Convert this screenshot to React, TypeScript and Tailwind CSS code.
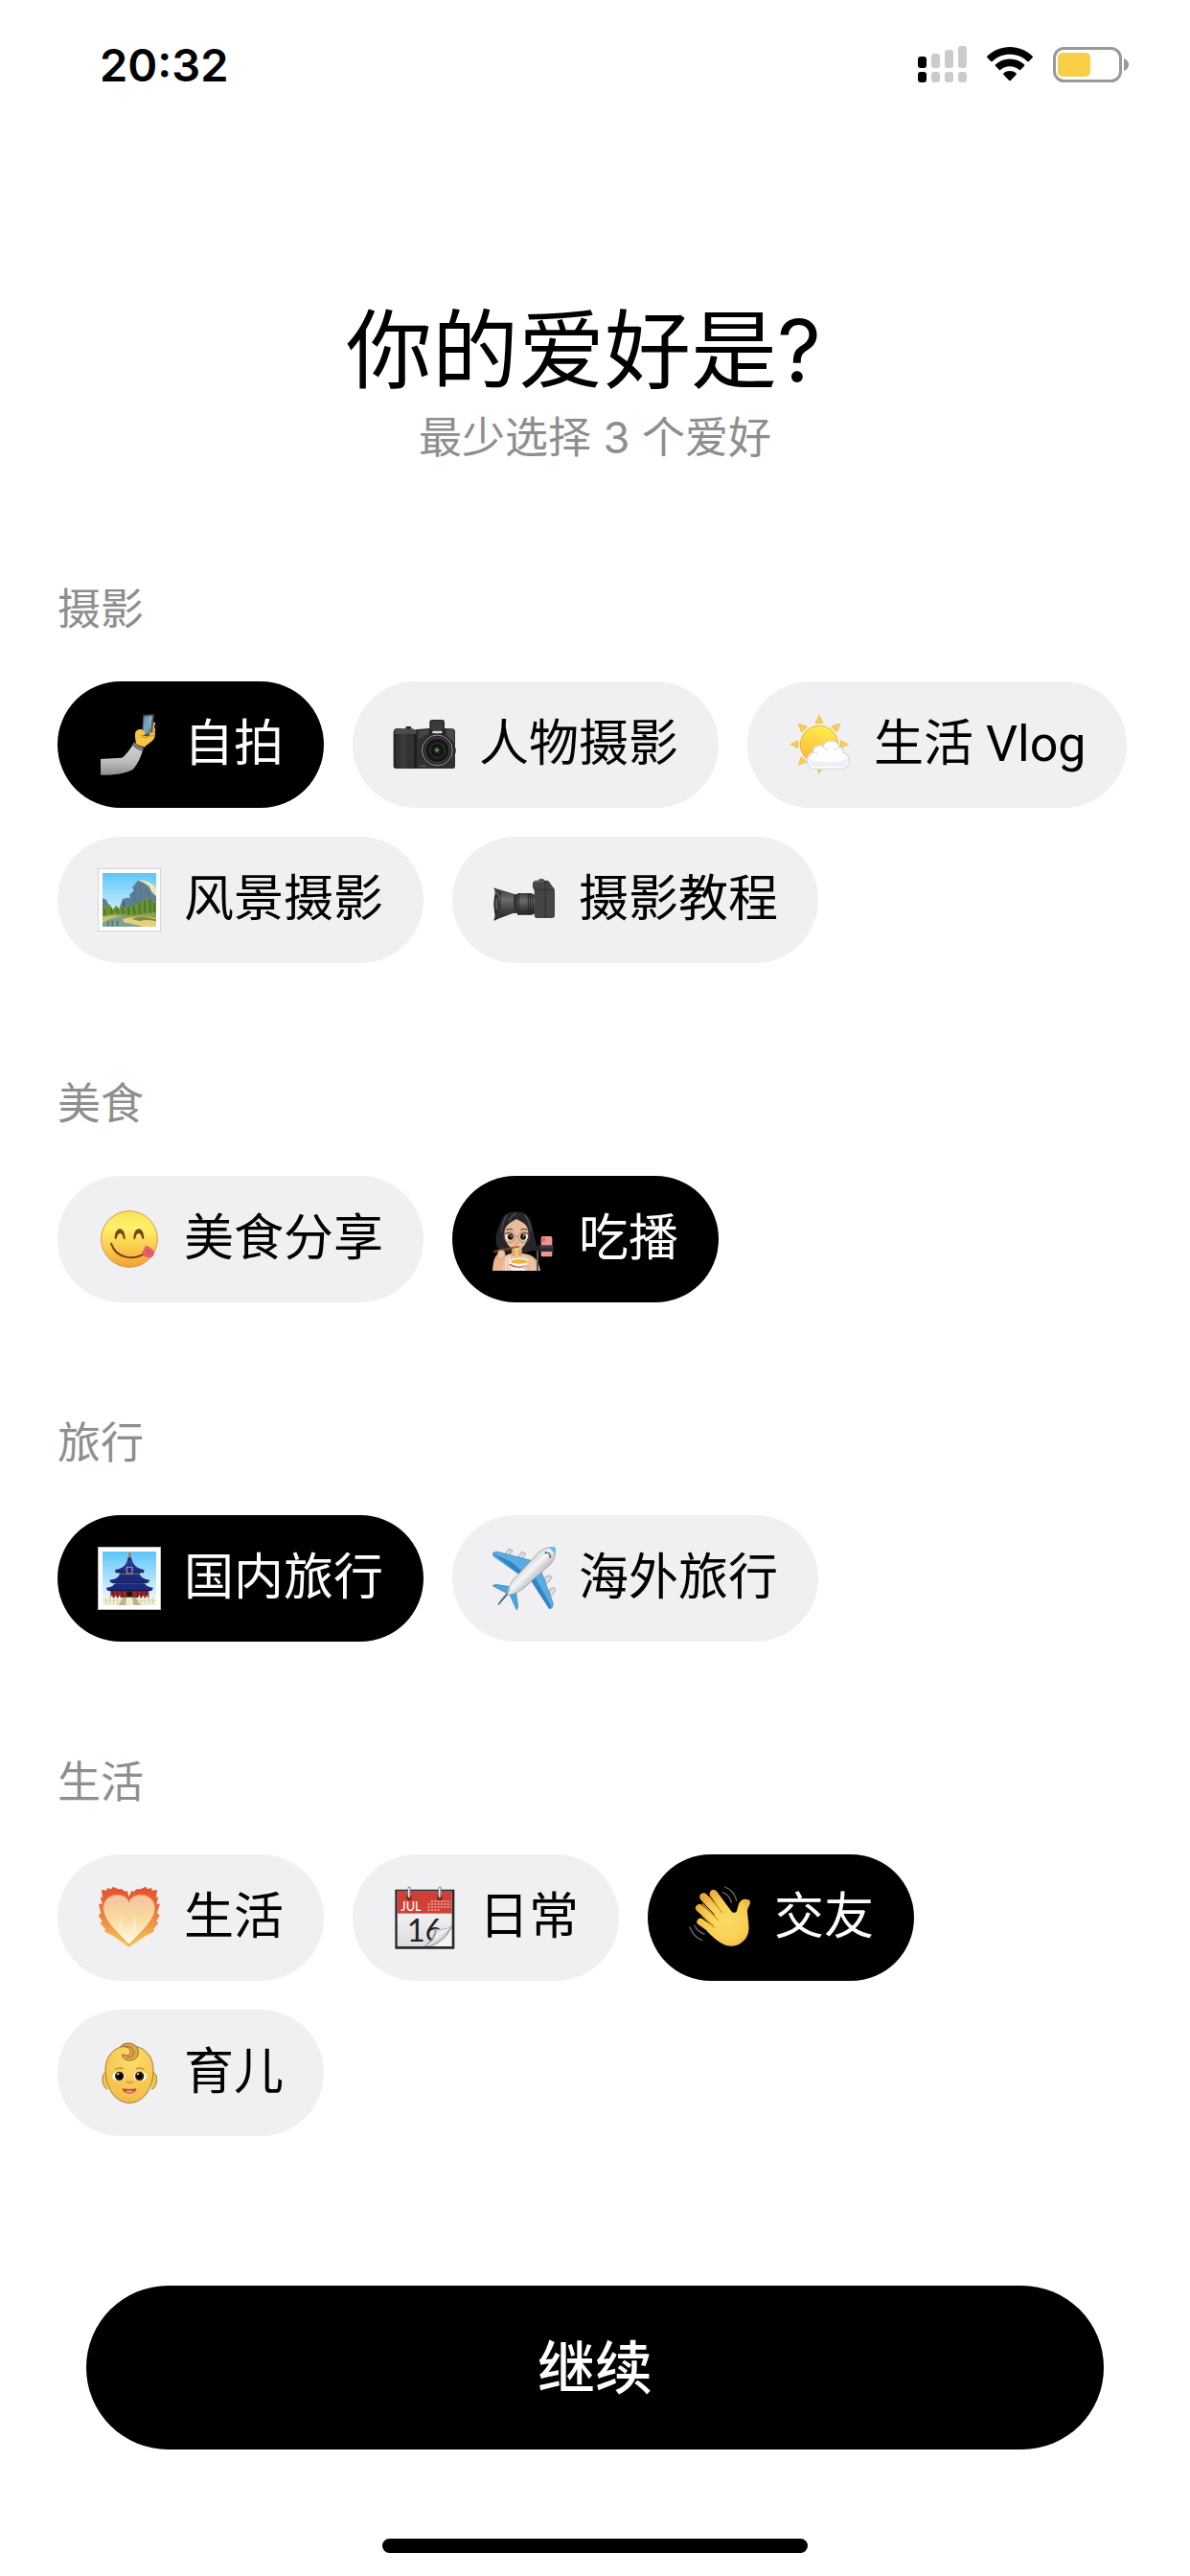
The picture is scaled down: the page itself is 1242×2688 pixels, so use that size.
import { useState } from "react";
import type { ReactNode } from "react";

function Art({ children }: { children: ReactNode }) {
  return (
    <svg viewBox="0 0 198 198" className="size-[66px] shrink-0" aria-hidden="true">
      {children}
    </svg>
  );
}

function SelfieIcon() {
  return (
    <Art>
      <defs>
        <linearGradient id="sleeve" x1="0" y1="0" x2="0" y2="1">
          <stop offset="0" stopColor="#d4d4d6" />
          <stop offset="0.6" stopColor="#bcbcbe" />
          <stop offset="1" stopColor="#8e8e90" />
        </linearGradient>
        <linearGradient id="glass" x1="0" y1="0" x2="1" y2="1">
          <stop offset="0" stopColor="#5e87a3" />
          <stop offset="0.5" stopColor="#7fa6bf" />
          <stop offset="1" stopColor="#496f8c" />
        </linearGradient>
      </defs>
      <path d="M9 144 L76 140 C92 128 105 108 114 92 Q126 104 143 110 C136 136 126 158 111 176 C88 190 44 195 9 194Z" fill="url(#sleeve)" />
      <path d="M114 92 Q126 106 143 110 L139 120 Q120 114 108 101Z" fill="#77777a" />
      <path d="M120 96 C118 84 115 70 118 60 C122 50 136 48 142 54 L168 40 C172 28 180 26 180 32 C181 36 176 40 178 46 C182 52 179 58 179 64 C180 72 178 80 172 86 C162 94 152 100 146 107 Q130 104 120 96Z" fill="#f6bd38" />
      <path d="M142 6 L172 4 Q177 4 176 9 L171 70 Q170 74 166 74 L141 71 Q137 70 138 66Z" fill="#47525c" />
      <path d="M145 11 L170 9 L165 66 L142 64Z" fill="url(#glass)" />
      <path d="M160 10 L170 9 L166 60Z" fill="#96b6c9" opacity="0.7" />
      <path d="M121 62 C124 49 142 50 145 58 Q154 66 143 70 Q136 70 138 77 Q154 78 162 73 L164 62 L178 56 L178 66 C174 84 157 96 147 105 L122 94Z" fill="#f9c545" />
      <path d="M134 68 Q138 80 156 76 M166 64 L178 59 M163 73 L176 70" stroke="#c9892a" strokeWidth="3" fill="none" />
    </Art>
  );
}

function CameraIcon() {
  return (
    <Art>
      <defs>
        <linearGradient id="grip" x1="0" y1="0" x2="1" y2="0">
          <stop offset="0" stopColor="#1f1f1f" />
          <stop offset="0.4" stopColor="#3c3c3c" />
          <stop offset="0.9" stopColor="#292929" />
          <stop offset="1" stopColor="#111" />
        </linearGradient>
        <radialGradient id="lens">
          <stop offset="0" stopColor="#5d8a4c" />
          <stop offset="0.2" stopColor="#1d3018" />
          <stop offset="0.4" stopColor="#0b0d0c" />
          <stop offset="0.7" stopColor="#1c1c1c" />
          <stop offset="1" stopColor="#0d0d0d" />
        </radialGradient>
      </defs>
      <path d="M70 52 L112 48 L166 48 L188 49 Q194 50 195 58 L195 168 Q195 174 188 174 L60 174Z" fill="#303030" />
      <path d="M82 56 L112 52 L112 66 L80 80Z" fill="#454545" />
      <path d="M168 52 L188 52 Q192 54 192 60 L192 92 L168 70Z" fill="#4a4a4a" />
      <rect x="115" y="21" width="47" height="46" rx="8" fill="#242424" />
      <rect x="119" y="24" width="39" height="30" rx="6" fill="#3a3a3a" />
      <rect x="124" y="56" width="30" height="8" rx="2" fill="#d8d8d8" />
      <rect x="40" y="42" width="18" height="10" rx="4" fill="#242424" />
      <path d="M10 48 Q3 50 2 60 L2 166 Q2 174 10 174 L74 174 L74 64 L66 50Z" fill="url(#grip)" />
      <path d="M10 48 L66 50 L74 66 L4 66Z" fill="#4c4c4c" />
      <path d="M14 70 V170 M60 70 V170" stroke="#555" strokeWidth="1.5" />
      <circle cx="139" cy="117" r="51" fill="#111" />
      <circle cx="139" cy="117" r="48" fill="#2c2c2c" stroke="#b5b5b5" strokeWidth="2.5" />
      <circle cx="139" cy="117" r="38" fill="url(#lens)" stroke="#484848" strokeWidth="3" />
      <circle cx="139" cy="117" r="22" fill="none" stroke="#3c3c3c" strokeWidth="3" />
      <circle cx="137" cy="115" r="8" fill="#2b4a24" />
      <circle cx="138" cy="116" r="3" fill="#b9dca6" />
      <rect x="191" y="110" width="6" height="16" rx="2" fill="#222" />
      <path d="M84 166 H104" stroke="#888" strokeWidth="2" />
    </Art>
  );
}

function SunIcon() {
  return (
    <Art>
      <defs>
        <linearGradient id="sun" x1="0.6" y1="0" x2="0.3" y2="1">
          <stop offset="0" stopColor="#fdee4c" />
          <stop offset="1" stopColor="#f7b838" />
        </linearGradient>
      </defs>
      {[0, 45, 90, 135, 180, 225, 270, 315].map((a) => (
        <path key={a} d="M99 7 L111 31 Q99 34 87 31Z" fill="#f9cf48" stroke="#eeb23f" strokeWidth="2" transform={`rotate(${a} 99 98)`} />
      ))}
      <circle cx="99" cy="99" r="59" fill="url(#sun)" stroke="#f3ae3a" strokeWidth="3" />
      <path d="M84 175 C55 175 55 128 80 124 C78 106 98 96 111 106 C118 80 157 82 163 108 C172 108 177 116 174 125 C200 127 200 174 170 175Z" fill="#fff" stroke="#d5d9e8" strokeWidth="4" />
      <path d="M82 169 C66 165 64 146 68 141 C76 154 96 150 104 150 C130 158 170 152 188 141 C191 160 182 169 168 169Z" fill="#eef0f8" />
      <path d="M111 107 Q122 108 125 117 M146 116 Q154 108 163 109 M80 125 Q89 122 94 128" fill="none" stroke="#dfe2ee" strokeWidth="4" strokeLinecap="round" />
    </Art>
  );
}

function Frame({ children }: { children: ReactNode }) {
  return (
    <Art>
      <defs>
        <linearGradient id="sky" x1="0" y1="0" x2="0" y2="1">
          <stop offset="0" stopColor="#5cc6fb" />
          <stop offset="0.8" stopColor="#def3fb" />
        </linearGradient>
        <clipPath id="frameClip">
          <rect x="15" y="15" width="168" height="168" />
        </clipPath>
      </defs>
      <rect x="1" y="1" width="196" height="196" fill="#fff" stroke="#c4c4c6" strokeWidth="2" />
      <rect x="15" y="15" width="168" height="168" fill="url(#sky)" />
      <g clipPath="url(#frameClip)">{children}</g>
    </Art>
  );
}

function LandscapeIcon() {
  return (
    <Frame>
      <path d="M15 94 L26 98 L42 128 L66 130 L78 96 L92 92 L100 94 L100 82 L114 70 L108 60 L126 38 L146 40 L166 52 L183 80 V140 H15Z" fill="#5e7d97" />
      <path d="M126 38 Q160 34 183 62 L183 88 L170 76 L160 56 L142 44Z" fill="#f0e6b4" />
      <path d="M118 64 L112 92 L122 104 L112 124 M130 54 L136 74 L128 98 L146 114 M150 62 L162 88 L156 106" stroke="#526f88" strokeWidth="3" fill="none" />
      <path d="M80 98 L74 126 L88 118Z" fill="#486780" />
      <path d="M15 120 L22 110 L28 124 L38 112 L46 130 L58 116 L68 128 L78 116 L86 126 L96 114 L104 124 L112 106 L120 118 L130 102 L136 112 L146 92 L152 104 L162 88 L168 110 L176 98 L183 108 V162 H15Z" fill="#6c9435" />
      <path d="M20 126 L24 150 M42 124 L45 148 M60 126 L64 146 M78 124 L80 146 M96 122 L98 146 M112 116 L116 150 M130 110 L132 148 M147 102 L148 146 M163 98 L166 146 M176 108 L178 148" stroke="#4b7829" strokeWidth="6" />
      <path d="M15 150 Q60 136 100 148 L183 138 V184 H15Z" fill="#8fa052" />
      <path d="M15 160 Q50 150 110 158 L126 184 H15Z" fill="#7fa199" />
      <path d="M15 152 Q45 144 72 150 L40 158 L15 170Z" fill="#c9c069" />
      <path d="M78 160 Q120 146 183 156 V184 H144 Q110 172 84 170Z" fill="#e5d07c" />
      <path d="M106 158 Q140 146 183 160 L183 166 Q150 158 132 166Z" fill="#7f8c3e" />
      <path d="M32 166 V180 M46 164 V182 M62 164 V180" stroke="#4f7a58" strokeWidth="5" />
    </Frame>
  );
}

function TempleIcon() {
  return (
    <Frame>
      <path d="M97 20 Q100 16 103 20 L104 44 H96Z" fill="#c8642b" />
      <path d="M94 36 Q100 30 106 36 C108 58 126 70 146 72 L144 80 H56 L54 72 C76 70 92 58 94 36Z" fill="#1d2c84" />
      <path d="M66 78 H134 L130 92 H70Z" fill="#3d5576" />
      <path d="M68 88 H132 C138 98 148 102 162 104 Q163 112 154 113 H46 Q37 112 38 104 C54 102 62 98 68 88Z" fill="#1b2a80" />
      <path d="M54 111 H146 L142 122 H58Z" fill="#4d6a80" />
      <path d="M52 116 H148 C154 124 162 126 173 128 Q172 138 164 138 H36 Q28 138 27 128 C40 126 48 124 52 116Z" fill="#1b2a80" />
      <path d="M40 138 H160 V160 H40Z" fill="#93272a" />
      <path d="M48 136 V160 M62 136 V160 M76 136 V160 M124 136 V160 M138 136 V160 M152 136 V160" stroke="#5e1718" strokeWidth="3" />
      <path d="M56 80 H144 M46 113 H154 M36 137 H164" stroke="#0c1442" strokeWidth="3" />
      <path d="M84 74 Q95 64 97 44 M112 74 Q106 66 103 44" stroke="#3d53b4" strokeWidth="3" fill="none" />
      <rect x="91" y="64" width="17" height="20" fill="#1b2a80" stroke="#d09a62" strokeWidth="3" />
      <rect x="91" y="140" width="17" height="20" fill="#2b0c10" />
      <path d="M15 160 H183 V184 H15Z" fill="#eeead0" />
      <path d="M20 154 V182 M32 154 V182 M44 154 V182 M56 154 V182 M68 154 V182 M130 154 V182 M142 154 V182 M154 154 V182 M166 154 V182 M178 154 V182" stroke="#f8f5e2" strokeWidth="5" />
      <path d="M15 168 H183 M26 160 V180 M38 160 V180 M50 160 V180 M62 160 V180 M136 160 V180 M148 160 V180 M160 160 V180 M172 160 V180" stroke="#cbc6a4" strokeWidth="2" />
      <path d="M80 158 H118 L136 184 H64Z" fill="#b9b58f" />
      <path d="M90 158 H108 L112 184 H88Z" fill="#f1eddb" />
    </Frame>
  );
}

function LensCameraIcon() {
  return (
    <Art>
      <defs>
        <linearGradient id="barrel" x1="0" y1="0" x2="0" y2="1">
          <stop offset="0" stopColor="#3b3b3b" />
          <stop offset="0.35" stopColor="#6c6c6c" />
          <stop offset="0.7" stopColor="#3f3f3f" />
          <stop offset="1" stopColor="#232323" />
        </linearGradient>
      </defs>
      <rect x="144" y="33" width="18" height="12" rx="5" fill="#555" />
      <path d="M126 58 V46 Q128 38 138 38 H172 Q178 40 183 50 L192 62 Q195 66 195 74 V148 Q194 156 186 156 H140 Q131 156 131 146 V68 Q126 66 126 58Z" fill="#454545" />
      <path d="M165 40 V66 M131 67 H193 M166 66 V154" stroke="#2e2e2e" strokeWidth="3" />
      <path d="M130 46 Q132 42 140 42 H160" stroke="#6e6e6e" strokeWidth="3" fill="none" />
      <path d="M4 62 Q6 60 12 64 L72 82 V138 L14 160 Q5 166 4 162 Q10 152 6 138 V86 Q10 72 4 62Z" fill="url(#barrel)" />
      <ellipse cx="12" cy="112" rx="8" ry="30" fill="#222" />
      <ellipse cx="13" cy="112" rx="4" ry="22" fill="#5a5a5a" />
      <path d="M4 62 Q22 74 24 90 Q18 112 24 134 Q18 152 4 162 L14 158 L28 150 Q22 112 28 76Z" fill="#333" />
      <rect x="66" y="81" width="12" height="60" rx="2" fill="#333" />
      <path d="M78 78 H122 L132 84 V142 L122 146 H78Z" fill="url(#barrel)" />
      <path d="M82 78 V146 M112 78 V146 M119 79 V145 M126 82 V144" stroke="#252525" strokeWidth="3" />
    </Art>
  );
}

function YumIcon() {
  return (
    <Art>
      <defs>
        <linearGradient id="yum" x1="0" y1="0" x2="0" y2="1">
          <stop offset="0" stopColor="#fae25a" />
          <stop offset="0.3" stopColor="#fdf16a" />
          <stop offset="0.65" stopColor="#f9cc4d" />
          <stop offset="1" stopColor="#f2a038" />
        </linearGradient>
      </defs>
      <circle cx="99" cy="99" r="88" fill="url(#yum)" stroke="#d99a34" strokeWidth="3" />
      <path d="M53 96 C54 58 85 56 86 98 Q84 102 80 97 C77 76 63 76 59 97 Q56 101 53 96Z M112 98 C113 56 144 58 145 96 Q142 101 139 97 C135 76 121 76 118 97 Q114 102 112 98Z" fill="#7a3f10" />
      <path d="M42 113 C60 166 118 164 150 142" fill="none" stroke="#7a3f10" strokeWidth="6" strokeLinecap="round" />
      <path d="M152 120 L142 138 Q136 146 146 151 C163 160 176 156 175 142 C174 128 163 128 152 120Z" fill="#e8606c" stroke="#cf4455" strokeWidth="2" />
      <path d="M151 134 Q163 134 162 146" fill="none" stroke="#b93748" strokeWidth="3" />
    </Art>
  );
}

function MukbangIcon() {
  return (
    <Art>
      <path d="M76 14 C110 8 125 44 128 76 C134 106 142 118 136 130 L104 142 H36 C12 132 8 110 12 84 C22 54 30 16 62 14 Q70 12 76 14Z" fill="#262527" />
      <path d="M44 24 Q32 44 28 76 M100 22 Q116 42 120 76 M76 18 Q60 24 50 44" stroke="#48474a" strokeWidth="5" fill="none" />
      <path d="M0 198 C2 172 6 156 14 148 C18 136 34 140 34 152 L56 144 H96 C132 148 144 166 150 198Z" fill="#e5b793" />
      <path d="M30 198 L40 152 L58 147 H94 L128 164 L138 198Z" fill="#edc6ac" />
      <path d="M44 156 V198 M52 152 V198" stroke="#f8e3d6" strokeWidth="3" />
      <path d="M60 122 H92 V152 H60Z" fill="#d9a480" />
      <path d="M38 72 C42 52 62 44 75 36 C88 44 110 50 112 74 C114 104 98 128 76 137 C54 128 34 108 38 72Z" fill="#e8bc99" />
      <ellipse cx="53" cy="92" rx="12" ry="9" fill="#fff" />
      <ellipse cx="98" cy="92" rx="12" ry="9" fill="#fff" />
      <circle cx="56" cy="92" r="9" fill="#24180f" />
      <circle cx="96" cy="92" r="9" fill="#24180f" />
      <circle cx="58" cy="89" r="2" fill="#fff" />
      <circle cx="98" cy="89" r="2" fill="#fff" />
      <g fill="none" stroke="#8d7a6b" strokeWidth="2">
        <circle cx="53" cy="93" r="17" />
        <circle cx="98" cy="93" r="17" />
        <path d="M70 91 Q75 87 81 91" />
      </g>
      <path d="M40 82 Q52 76 64 84 M88 84 Q100 76 112 82 M42 70 Q54 64 64 70 M88 70 Q98 64 110 70" stroke="#3f3028" strokeWidth="3" fill="none" />
      <path d="M72 110 Q76 114 80 110" stroke="#b98264" strokeWidth="3" fill="none" />
      <path d="M66 123 Q76 117 86 123 Q76 132 66 123Z" fill="#c9555a" />
      <path d="M3 136 L68 124 M3 141 L68 127" stroke="#7a4a2a" strokeWidth="3" />
      <path d="M18 136 Q38 128 40 146 Q38 160 26 164 L16 158Z" fill="#edc4a3" stroke="#c08d69" strokeWidth="2" />
      <path d="M73 126 V166 M78 126 V166" stroke="#f2cd59" strokeWidth="5" />
      <ellipse cx="84" cy="169" rx="33" ry="11" fill="#f8f8f8" />
      <ellipse cx="84" cy="169" rx="27" ry="7" fill="#f0b33f" />
      <path d="M51 170 Q84 188 117 170 Q116 190 106 198 H62 Q52 188 51 170Z" fill="#f3f5f8" />
      <path d="M53 178 Q84 196 115 178" fill="none" stroke="#d9463f" strokeWidth="4" />
      <path d="M108 166 Q124 162 128 180 L136 198 H100 L116 188 L92 186 L94 180 H108Z" fill="#edc4a3" />
      <path d="M92 185 H116 M96 191 H116" stroke="#c08d69" strokeWidth="2" />
      <path d="M141 126 V198" stroke="#55565a" strokeWidth="6" />
      <path d="M118 124 Q124 114 136 120 L154 116 V136 H134 L120 134Z" fill="#222326" />
      <rect x="152" y="90" width="35" height="64" rx="5" fill="#f09593" />
      <rect x="155" y="94" width="10" height="14" rx="3" fill="#d46e6e" />
      <path d="M150 118 H191 V138 H150Z" fill="#2c2d30" />
      <path d="M150 123 H190" stroke="#56585c" strokeWidth="2" />
    </Art>
  );
}

function PlaneIcon() {
  return (
    <Art>
      <defs>
        <linearGradient id="hull" x1="0.3" y1="0.3" x2="0.7" y2="0.7">
          <stop offset="0" stopColor="#bfc1c5" />
          <stop offset="0.45" stopColor="#f5f5f6" />
          <stop offset="1" stopColor="#a2a4a8" />
        </linearGradient>
      </defs>
      <g fill="#dcdee1" stroke="#85888d" strokeWidth="2">
        <path d="M52 6 L63 12 L50 30 L38 24Z" />
        <path d="M93 15 L104 22 L92 40 L80 34Z" />
        <path d="M166 94 L180 90 L186 97 L172 114 L162 110Z" />
        <path d="M180 132 L192 128 L198 135 L186 152 L177 150Z" />
      </g>
      <path d="M0 20 L12 15 L118 42 L130 68 L92 92 L4 30Z" fill="#59ade3" stroke="#347fb5" strokeWidth="2" />
      <path d="M0 20 L92 92 L100 84 L60 48Z" fill="#3184c4" />
      <path d="M120 104 L152 76 L190 178 L186 192 L178 194Z" fill="#59ade3" stroke="#347fb5" strokeWidth="2" />
      <path d="M120 104 L178 194 L184 186 L132 94Z" fill="#3184c4" />
      <path d="M0 122 L10 118 L62 126 L46 146Z" fill="#4da4de" stroke="#347fb5" strokeWidth="2" />
      <path d="M54 150 L72 132 L80 188 L76 198Z" fill="#4da4de" stroke="#347fb5" strokeWidth="2" />
      <path d="M196 3 C200 24 194 42 180 56 L102 126 C84 142 62 152 46 150 C46 134 58 110 74 94 L142 20 C158 6 176 -2 196 3Z" fill="url(#hull)" stroke="#8a8c90" strokeWidth="2" />
      <path d="M176 3 C184 1 192 1 196 3 Q199 12 197 23 Q188 12 176 3Z" fill="#55c4ee" />
      <path d="M164 19 Q182 16 181 35" fill="none" stroke="#4a4d52" strokeWidth="5" strokeDasharray="7 3" />
      <path d="M60 128 L46 150 L18 182 L24 168 L46 140Z" fill="#9ea3a9" />
      <path d="M47 148 L18 181" stroke="#34536f" strokeWidth="4" />
    </Art>
  );
}

function HeartIcon() {
  return (
    <Art>
      <defs>
        <linearGradient id="flame" x1="0" y1="0" x2="0" y2="1">
          <stop offset="0" stopColor="#e2502b" />
          <stop offset="0.4" stopColor="#ea7440" />
          <stop offset="1" stopColor="#f7cf52" />
        </linearGradient>
        <linearGradient id="core" x1="0" y1="0" x2="0" y2="1">
          <stop offset="0" stopColor="#f4c2a0" />
          <stop offset="0.5" stopColor="#fadb9f" />
          <stop offset="1" stopColor="#fffef2" />
        </linearGradient>
      </defs>
      <path d="M98 34 L106 14 L112 18 L122 10 L134 10 L150 2 L156 10 L168 6 L170 14 L186 12 L183 36 L190 34 L184 56 L195 56 L186 84 L194 92 L184 110 L190 116 L174 136 L178 142 L150 156 L98 192 L48 156 L20 142 L24 136 L8 116 L14 110 L2 92 L10 84 L3 56 L14 56 L8 34 L15 36 L12 12 L28 14 L30 6 L42 10 L48 2 L64 10 L76 10 L86 18 L92 14Z" fill="url(#flame)" />
      <path d="M98 50 C108 18 174 18 179 66 C181 108 132 148 98 184 C64 148 16 108 17 66 C22 18 88 18 98 50Z" fill="url(#core)" stroke="#ee8e50" strokeWidth="3" />
      <path d="M70 130 Q72 110 80 100 M114 136 Q114 112 120 100" stroke="#fffadc" strokeWidth="7" strokeLinecap="round" fill="none" opacity="0.5" />
    </Art>
  );
}

function CalendarIcon() {
  return (
    <Art>
      <defs>
        <linearGradient id="sheet" x1="0" y1="0" x2="0" y2="1">
          <stop offset="0" stopColor="#fff" />
          <stop offset="1" stopColor="#dcdcde" />
        </linearGradient>
        <linearGradient id="curl" x1="0" y1="0" x2="1" y2="1">
          <stop offset="0.1" stopColor="#8b8b8b" />
          <stop offset="0.45" stopColor="#f5f5f5" />
          <stop offset="0.8" stopColor="#b0b0b0" />
        </linearGradient>
      </defs>
      <rect x="7" y="11" width="186" height="186" rx="2" fill="#26292c" />
      <rect x="14" y="17" width="171" height="172" fill="url(#sheet)" />
      <rect x="14" y="17" width="171" height="69" fill="#cf4136" />
      <text x="25" y="78" fontSize="38" fontWeight="500" fill="#fff" fontFamily="Lato, sans-serif">JUL</text>
      <path d="M120 48 H182 M110 57 H182 M110 66 H182 M110 75 H150" stroke="#f0aaa2" strokeWidth="5" strokeDasharray="6 4" />
      <text x="44" y="174" fontSize="98" fill="#222" fontFamily="Lato, sans-serif">16</text>
      <path d="M100 186 Q134 158 130 132 Q156 142 185 124 V189 H100Z" fill="#8e8e90" opacity="0.75" />
      <path d="M104 186 Q140 166 136 134 Q160 142 180 128 Q158 174 118 186Z" fill="url(#curl)" />
      <path d="M122 189 Q164 172 184 132 V189Z" fill="#f4f4f5" />
      <circle cx="51" cy="36" r="8" fill="#5b1b18" />
      <circle cx="147" cy="36" r="8" fill="#5b1b18" />
      <path d="M51 6 V34 M147 6 V34" stroke="#8a8d90" strokeWidth="9" strokeLinecap="round" />
      <path d="M50 7 V32 M146 7 V32" stroke="#e9eaeb" strokeWidth="4" strokeLinecap="round" />
    </Art>
  );
}

function WaveIcon() {
  return (
    <Art>
      <defs>
        <radialGradient id="palm" gradientUnits="userSpaceOnUse" cx="120" cy="110" r="105">
          <stop offset="0" stopColor="#fbdb68" />
          <stop offset="0.6" stopColor="#f9cf52" />
          <stop offset="1" stopColor="#e9a93a" />
        </radialGradient>
      </defs>
      <path d="M116 3 Q144 14 152 46 M109 20 Q130 28 136 52 M6 129 Q16 158 44 170 M21 124 Q30 144 51 150" fill="none" stroke="#6b6b66" strokeWidth="4" strokeLinecap="round" />
      <g stroke="url(#palm)" strokeLinecap="round" fill="none">
        <path d="M80 24 L130 92" strokeWidth="25" />
        <path d="M49 34 L112 102" strokeWidth="25" />
        <path d="M36 69 L100 126" strokeWidth="24" />
        <path d="M39 112 L96 152" strokeWidth="22" />
      </g>
      <path d="M110 48 L134 78 Q142 88 152 80 C158 68 156 44 176 41 Q196 40 195 52 C194 62 187 66 186 80 C188 106 192 120 190 140 C186 176 146 198 114 184 C92 174 76 158 60 142 L80 120 L84 84Z" fill="url(#palm)" />
      <path d="M66 34 L108 84 M46 56 L94 106 M46 94 L82 130" stroke="#d79c2f" strokeWidth="4" strokeLinecap="round" />
    </Art>
  );
}

function BabyIcon() {
  return (
    <Art>
      <defs>
        <radialGradient id="baby" cx="0.55" cy="0.25" r="0.8">
          <stop offset="0" stopColor="#fbdc6a" />
          <stop offset="0.6" stopColor="#f7c855" />
          <stop offset="1" stopColor="#efba4b" />
        </radialGradient>
      </defs>
      <path d="M28 98 C8 96 12 148 32 150 M170 98 C192 96 188 148 168 150" fill="#f5c351" stroke="#a87830" strokeWidth="3" />
      <path d="M99 14 C148 14 175 48 174 92 C174 146 144 193 99 193 C54 193 26 146 24 92 C23 48 50 14 99 14Z" fill="url(#baby)" stroke="#a87830" strokeWidth="3" />
      <path d="M71 18 C80 2 110 2 122 18 C134 36 124 60 102 60 C84 60 74 50 78 40 C84 46 100 48 102 34 C104 20 84 14 71 18Z" fill="#dda647" stroke="#9a6a2a" strokeWidth="3" />
      <path d="M84 16 C106 14 118 28 110 44 Q104 52 92 50" fill="none" stroke="#9a6a2a" strokeWidth="3" />
      <path d="M56 88 Q66 80 78 86 M122 86 Q134 80 144 88" fill="none" stroke="#b9802f" strokeWidth="4" strokeLinecap="round" />
      <ellipse cx="66" cy="110" rx="20" ry="14" fill="#fff" />
      <ellipse cx="133" cy="110" rx="20" ry="14" fill="#fff" />
      <circle cx="68" cy="109" r="14" fill="#33180c" />
      <circle cx="131" cy="109" r="14" fill="#33180c" />
      <circle cx="69" cy="109" r="8" fill="#000" />
      <circle cx="130" cy="109" r="8" fill="#000" />
      <circle cx="64" cy="103" r="3" fill="#fff" />
      <circle cx="126" cy="103" r="3" fill="#fff" />
      <path d="M90 126 Q99 134 109 126" fill="none" stroke="#e0983e" strokeWidth="5" strokeLinecap="round" />
      <path d="M76 148 Q99 152 122 148 Q116 164 99 164 Q82 164 76 148Z" fill="#b9402d" />
      <path d="M84 156 Q99 150 114 156 Q108 163 99 163 Q90 163 84 156Z" fill="#ee8585" />
    </Art>
  );
}

type Hobby = { id: string; label: string; icon: () => ReactNode };

const groups: { title: string; items: Hobby[] }[] = [
  {
    title: "摄影",
    items: [
      { id: "selfie", label: "自拍", icon: SelfieIcon },
      { id: "portrait", label: "人物摄影", icon: CameraIcon },
      { id: "vlog", label: "生活 Vlog", icon: SunIcon },
      { id: "landscape", label: "风景摄影", icon: LandscapeIcon },
      { id: "tutorial", label: "摄影教程", icon: LensCameraIcon },
    ],
  },
  {
    title: "美食",
    items: [
      { id: "food", label: "美食分享", icon: YumIcon },
      { id: "mukbang", label: "吃播", icon: MukbangIcon },
    ],
  },
  {
    title: "旅行",
    items: [
      { id: "domestic", label: "国内旅行", icon: TempleIcon },
      { id: "abroad", label: "海外旅行", icon: PlaneIcon },
    ],
  },
  {
    title: "生活",
    items: [
      { id: "life", label: "生活", icon: HeartIcon },
      { id: "daily", label: "日常", icon: CalendarIcon },
      { id: "friends", label: "交友", icon: WaveIcon },
      { id: "parenting", label: "育儿", icon: BabyIcon },
    ],
  },
];

function StatusBar() {
  return (
    <header className="flex h-[134px] items-center justify-between pl-[104px] pr-16">
      <time className="text-[47px] leading-none font-semibold">20:32</time>
      <div className="flex items-center gap-[21px]">
        <svg viewBox="0 0 51 38" className="h-[38px] w-[51px]" role="img" aria-label="信号">
          <g fill="#cbcbcb">
            <rect x="14" y="8" width="9" height="15" rx="3" />
            <rect x="28" y="4" width="9" height="19" rx="3" />
            <rect x="42" y="0" width="9" height="23" rx="3" />
            <rect x="14" y="27" width="9" height="11" rx="3" />
            <rect x="28" y="27" width="9" height="11" rx="3" />
            <rect x="42" y="27" width="9" height="11" rx="3" />
          </g>
          <rect x="0" y="11" width="9" height="12" rx="3" />
          <rect x="0" y="27" width="9" height="11" rx="3" />
        </svg>
        <svg viewBox="0 0 48 36" className="h-9 w-12" role="img" aria-label="无线网络">
          <path d="M24 0 C33 0 41 3.500 47.500 9.500 Q48.300 10.300 47.500 11.200 L43.800 15 Q43 15.700 42.200 15 C37 10.300 31 7.800 24 7.800 C17 7.800 11 10.300 5.800 15 Q5 15.700 4.200 15 L0.500 11.200 Q-0.300 10.300 0.500 9.500 C7 3.500 15 0 24 0Z" />
          <path d="M24 12.500 C30 12.500 35 14.800 39 18.300 Q39.800 19.100 39 20 L35.200 23.800 Q34.400 24.500 33.600 23.800 C31 21.500 28 20.200 24 20.200 C20 20.200 17 21.500 14.400 23.800 Q13.600 24.500 12.800 23.800 L9 20 Q8.200 19.100 9 18.300 C13 14.800 18 12.500 24 12.500Z" />
          <path d="M24 25 C26.500 25 28.700 25.800 30.400 27.200 Q31.300 28 30.500 28.900 L24.800 34.900 Q24 35.700 23.200 34.900 L17.500 28.900 Q16.700 28 17.600 27.200 C19.300 25.800 21.500 25 24 25Z" />
        </svg>
        <svg viewBox="0 0 79 37" className="h-[37px] w-[79px]" role="img" aria-label="电池">
          <rect x="1.500" y="1.500" width="69" height="34" rx="10" fill="none" stroke="#999" strokeWidth="3" />
          <rect x="5" y="6" width="34" height="25" rx="5" fill="#f7ce45" />
          <path d="M74 12 C77 13 79 15.500 79 18.500 C79 21.500 77 24 74 25Z" fill="#999" />
        </svg>
      </div>
    </header>
  );
}

export default function App() {
  const [selected, setSelected] = useState<string[]>(["selfie", "mukbang", "domestic", "friends"]);
  const toggle = (id: string) =>
    setSelected((cur) => (cur.includes(id) ? cur.filter((x) => x !== id) : [...cur, id]));

  return (
    <div lang="zh-CN" className="flex min-h-screen flex-col bg-white font-[Inter,'Noto_Sans_CJK_SC',sans-serif] text-black">
      <StatusBar />
      <main className="flex flex-1 flex-col">
        <div className="flex flex-col items-center gap-[10px] pt-[178px] text-center">
          <h1 className="pr-6 text-[90px] leading-[108px] font-normal">你的爱好是?</h1>
          <p className="text-[45px] leading-[54px] text-[#8e8e8e]">最少选择 3 个爱好</p>
        </div>
        <div className="mt-[125px] flex flex-col gap-[120px] px-[60px]">
          {groups.map((group) => (
            <section key={group.title} className="flex flex-col gap-12">
              <h2 className="text-[45px] leading-[54px] font-normal text-[#8e8e8e]">{group.title}</h2>
              <div className="flex flex-wrap gap-[30px]">
                {group.items.map(({ id, label, icon: Icon }) => {
                  const on = selected.includes(id);
                  return (
                    <button
                      key={id}
                      type="button"
                      aria-pressed={on}
                      onClick={() => toggle(id)}
                      className={`flex h-[132px] items-center gap-6 rounded-full px-[42px] font-[Roboto,'Noto_Sans_CJK_SC',sans-serif] text-[52px] leading-[60px] whitespace-nowrap ${
                        on ? "bg-black text-white" : "bg-[#f0f0f2] text-black"
                      }`}
                    >
                      <Icon />
                      <span>{label}</span>
                    </button>
                  );
                })}
              </div>
            </section>
          ))}
        </div>
      </main>
      <footer className="flex flex-col items-center gap-[93px] px-[90px] pt-12 pb-6">
        <button
          type="button"
          disabled={selected.length < 3}
          className="h-[171px] w-full rounded-full bg-black text-[60px] leading-[72px] font-medium text-white"
        >
          继续
        </button>
        <div className="h-[15px] w-[444px] rounded-full bg-black" />
      </footer>
    </div>
  );
}
